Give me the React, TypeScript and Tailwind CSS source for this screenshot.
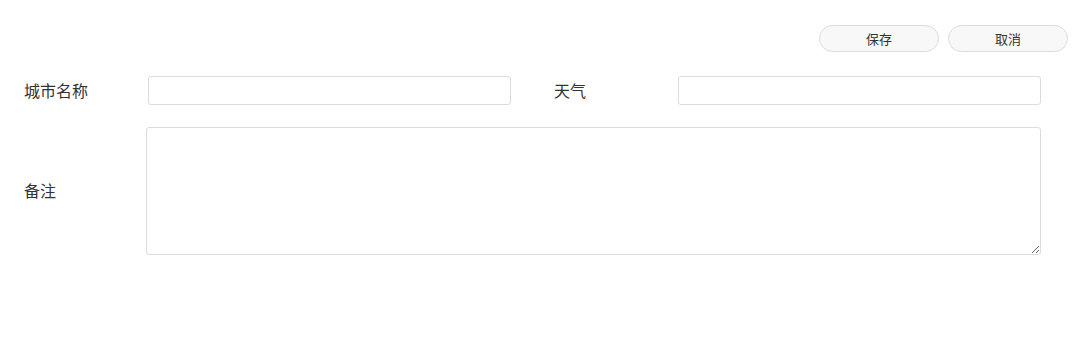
import React from "react";

export default function App() {
  return (
    <div
      className="w-[1075px] h-[362px] bg-white text-[#333]"
      style={{ fontFamily: '"Noto Sans CJK SC", "Noto Sans", sans-serif' }}
    >
      <div className="flex justify-end gap-[9px] pt-[25px] pr-[7px]">
        <button className="w-[120px] h-[27px] rounded-full border border-[#dcdcdc] bg-[#f8f8f8] text-[13px] leading-none text-[#333]">
          保存
        </button>
        <button className="w-[120px] h-[27px] rounded-full border border-[#dcdcdc] bg-[#f8f8f8] text-[13px] leading-none text-[#333]">
          取消
        </button>
      </div>
      <div className="flex items-center pl-[24px] mt-[24px]">
        <div className="w-[124px] text-[16px] leading-none mb-[2px]">城市名称</div>
        <input className="w-[363px] h-[29px] rounded-[3px] border border-[#dcdcdc] outline-none" />
        <div className="w-[124px] ml-[43px] text-[16px] leading-none mb-[2px]">天气</div>
        <input className="w-[363px] h-[29px] rounded-[3px] border border-[#dcdcdc] outline-none" />
      </div>
      <div className="flex items-center pl-[24px] mt-[22px]">
        <div className="w-[122px] text-[16px] leading-none mb-[2px]">备注</div>
        <textarea className="w-[895px] h-[128px] rounded-[3px] border border-[#dcdcdc] outline-none block" />
      </div>
    </div>
  );
}
